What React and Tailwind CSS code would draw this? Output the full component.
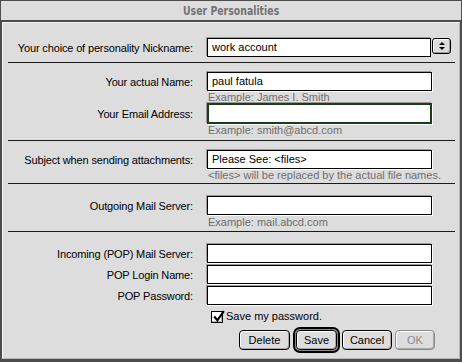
// Mac OS 9 style "User Personalities" dialog, laid out in flow with fixed row heights.
const UI = { fontFamily: '"Liberation Sans", Arial, sans-serif' };

function Field({ value, focused, wide = 'w-[225px]' }) {
  if (focused) {
    return (
      <div className={`${wide} h-[21px] border-2 border-[#1d3b1d] bg-white shadow-[-1px_-1px_0_#9a9a9a,1px_1px_0_#ffffff]`} />
    );
  }
  return (
    <div
      className={`${wide} h-[19px] whitespace-nowrap border border-black bg-white px-[4px] text-[11px] leading-[17px] text-black shadow-[-1px_-1px_0_#9a9a9a,1px_1px_0_#ffffff]`}
    >
      {value}
    </div>
  );
}

function Row({ label, children, className = '' }) {
  return (
    <div className={`flex items-center ${className}`}>
      <div className="w-[190px] whitespace-nowrap text-right text-[11px] leading-[14px] tracking-[-0.15px] text-black">
        {label}
      </div>
      <div className="ml-[14px] flex items-center">{children}</div>
    </div>
  );
}

function Hint({ children }) {
  return (
    <div className="ml-[205px] h-[12px] whitespace-nowrap text-[11px] leading-[12px] text-[#6e6e6e]">{children}</div>
  );
}

function Sep({ className = '' }) {
  return <div className={`ml-[5px] mr-[4px] h-px bg-[#1a1a1a] ${className}`} />;
}

function Button({ children, disabled, w }) {
  return (
    <div
      className={`${w} flex h-[20px] items-center justify-center rounded-[4px] border bg-[#dddddd] text-[11px] shadow-[inset_1px_1px_0_#ffffff,inset_-1px_-1px_0_#a8a8a8] ${
        disabled ? 'border-[#8a8a8a] text-[#8a8a8a]' : 'border-black text-black'
      }`}
    >
      {children}
    </div>
  );
}

export default function App() {
  return (
    <div className="flex h-[362px] w-[462px] flex-col bg-[#4d4d4d] px-px pt-px pb-[3px]" style={UI}>
      <div className="flex h-[19px] items-center justify-center bg-[#dddddd]">
        <span
          className="inline-block scale-x-[0.8] text-[13px] font-bold text-[#737373]"
          style={{ fontFamily: '"DejaVu Sans Condensed", "DejaVu Sans", sans-serif' }}
        >
          User Personalities
        </span>
      </div>
      <div className="mt-[2px] mx-px flex flex-1 flex-col border-t border-l border-[#f4f4f4] border-r border-b border-r-[#b8b8b8] border-b-[#b8b8b8] bg-[#dddddd]">
        <Row label="Your choice of personality Nickname:" className="mt-[15px]">
          <div className="w-[224px] h-[19px] whitespace-nowrap border border-black bg-white px-[4px] text-[11px] leading-[17px] shadow-[-1px_-1px_0_#9a9a9a]">
            work account
          </div>
          <div className="ml-px flex h-[16px] w-[19px] flex-col items-center justify-center gap-[2px] rounded-[3px] border border-black bg-[#dddddd] shadow-[inset_1px_1px_0_#ffffff,inset_-1px_-1px_0_#a0a0a0] self-start">
            <span className="h-0 w-0 border-x-[3px] border-b-[3px] border-x-transparent border-b-black" />
            <span className="h-0 w-0 border-x-[3px] border-t-[3px] border-x-transparent border-t-black" />
          </div>
        </Row>
        <Sep className="mt-[5px]" />

        <Row label="Your actual Name:" className="mt-[9px]">
          <Field value="paul fatula" />
        </Row>
        <Hint>Example: James I. Smith</Hint>
        <Row label="Your Email Address:">
          <Field focused />
        </Row>
        <Hint>Example: smith@abcd.com</Hint>
        <Sep className="mt-[4px]" />

        <Row label="Subject when sending attachments:" className="mt-[9px]">
          <Field value="Please See: <files>" />
        </Row>
        <Hint>&lt;files&gt; will be replaced by the actual file names.</Hint>
        <Sep className="mt-[2px]" />

        <Row label="Outgoing Mail Server:" className="mt-[12px]">
          <Field />
        </Row>
        <div className="mt-px">
          <Hint>Example: mail.abcd.com</Hint>
        </div>
        <Sep className="mt-[3px]" />

        <Row label="Incoming (POP) Mail Server:" className="mt-[12px]">
          <Field />
        </Row>
        <Row label="POP Login Name:" className="mt-[2px]">
          <Field />
        </Row>
        <Row label="POP Password:" className="mt-[2px]">
          <Field />
        </Row>

        <div className="ml-[208px] mt-[5px] flex h-[13px] items-center gap-[3px] text-[11px] text-black">
          <div className="relative h-[12px] w-[12px] border border-black bg-white shadow-[inset_-1px_-1px_0_#bbbbbb]">
            <svg viewBox="0 0 12 12" className="absolute -top-[2px] left-0 h-[13px] w-[13px]">
              <path d="M2 6 L5 9.5 L11 1" fill="none" stroke="black" strokeWidth="2" />
            </svg>
          </div>
          <span>Save my password.</span>
        </div>

        <div className="ml-[236px] mt-[4px] flex items-center">
          <Button w="w-[51px]">Delete</Button>
          <div className="ml-[3px] rounded-[7px] border-2 border-black p-px shadow-[inset_0_0_0_1px_#8a8a8a]">
            <Button w="w-[41px]">Save</Button>
          </div>
          <div className="ml-[2px]">
            <Button w="w-[50px]">Cancel</Button>
          </div>
          <div className="ml-[3px]">
            <Button w="w-[40px]" disabled>
              OK
            </Button>
          </div>
        </div>
      </div>
    </div>
  );
}
